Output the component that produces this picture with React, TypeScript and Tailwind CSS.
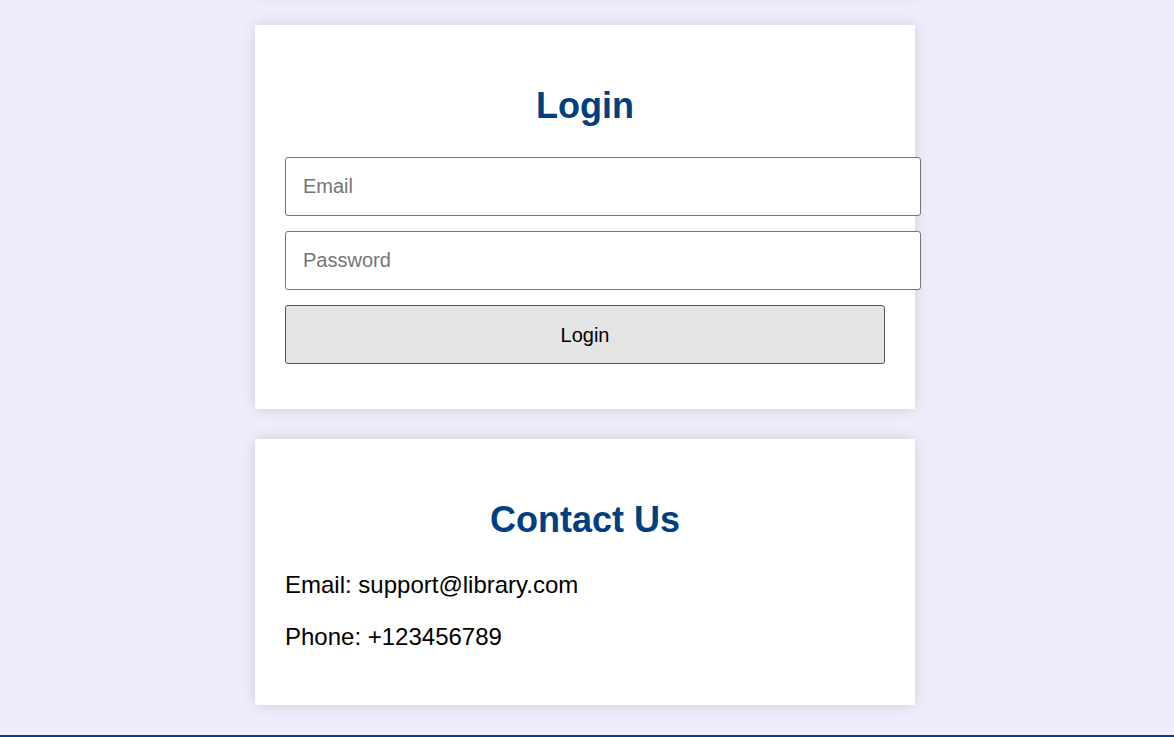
import React from "react";

export default function App() {
  return (
    <div className="h-[737px] overflow-hidden bg-[#eeedfb] font-['Liberation_Sans',Arial,sans-serif] text-black">
      <div className="ml-[255px] flex w-[660px] flex-col gap-[30px]">
        <div className="-mt-[15px] h-[10px] w-[660px] bg-white shadow-[0_0_14px_rgba(0,0,0,0.13)]" />

        <div className="w-[660px] bg-white px-[30px] pb-[45px] pt-[60px] shadow-[0_0_14px_rgba(0,0,0,0.13)]">
          <h2 className="text-center text-[36px] font-bold leading-[41px] text-[#004080]">Login</h2>
          <form className="mt-[31px] flex flex-col gap-[15px]" onSubmit={(e) => e.preventDefault()}>
            <input
              type="email"
              placeholder="Email"
              className="block h-[59px] w-[636px] rounded-[3px] border border-[#767676] bg-white px-[17px] text-[20px] outline-none placeholder:text-[#757575]"
            />
            <input
              type="password"
              placeholder="Password"
              className="block h-[59px] w-[636px] rounded-[3px] border border-[#767676] bg-white px-[17px] text-[20px] outline-none placeholder:text-[#757575]"
            />
            <button
              type="submit"
              className="block h-[59px] w-[600px] rounded-[3px] border border-[#555555] bg-[#e4e4e4] text-[20px] text-black"
            >
              Login
            </button>
          </form>
        </div>

        <div className="w-[660px] bg-white px-[30px] pb-[52px] pt-[60px] shadow-[0_0_14px_rgba(0,0,0,0.13)]">
          <h2 className="text-center text-[36px] font-bold leading-[41px] text-[#004080]">Contact Us</h2>
          <p className="mt-[29px] text-[24px] leading-[32px]">Email: support@library.com</p>
          <p className="mt-[20px] text-[24px] leading-[32px]">Phone: +123456789</p>
        </div>
      </div>
      <div className="mt-[30px] h-[40px] w-full bg-[#003f7f]" />
    </div>
  );
}
